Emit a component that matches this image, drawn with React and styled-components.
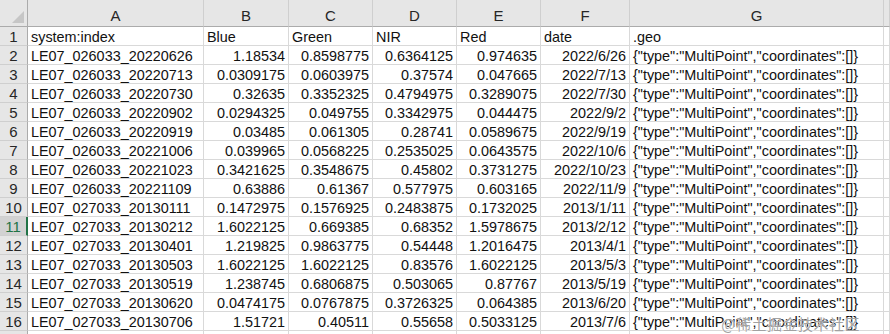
import React from 'react'
import styled, { createGlobalStyle } from 'styled-components'

const GlobalStyle = createGlobalStyle`
    html, body {
        margin: 0;
        padding: 0;
        background: #ffffff;
        overflow: hidden;
    }
`

const columns = [
    { letter: 'A', width: 176 },
    { letter: 'B', width: 85 },
    { letter: 'C', width: 84 },
    { letter: 'D', width: 84 },
    { letter: 'E', width: 84 },
    { letter: 'F', width: 89 },
    { letter: 'G', width: 254 },
]

const GEO = '{"type":"MultiPoint","coordinates":[]}'

const rows = [
    ['LE07_026033_20220626', '1.18534', '0.8598775', '0.6364125', '0.974635', '2022/6/26'],
    ['LE07_026033_20220713', '0.0309175', '0.0603975', '0.37574', '0.047665', '2022/7/13'],
    ['LE07_026033_20220730', '0.32635', '0.3352325', '0.4794975', '0.3289075', '2022/7/30'],
    ['LE07_026033_20220902', '0.0294325', '0.049755', '0.3342975', '0.044475', '2022/9/2'],
    ['LE07_026033_20220919', '0.03485', '0.061305', '0.28741', '0.0589675', '2022/9/19'],
    ['LE07_026033_20221006', '0.039965', '0.0568225', '0.2535025', '0.0643575', '2022/10/6'],
    ['LE07_026033_20221023', '0.3421625', '0.3548675', '0.45802', '0.3731275', '2022/10/23'],
    ['LE07_026033_20221109', '0.63886', '0.61367', '0.577975', '0.603165', '2022/11/9'],
    ['LE07_027033_20130111', '0.1472975', '0.1576925', '0.2483875', '0.1732025', '2013/1/11'],
    ['LE07_027033_20130212', '1.6022125', '0.669385', '0.68352', '1.5978675', '2013/2/12'],
    ['LE07_027033_20130401', '1.219825', '0.9863775', '0.54448', '1.2016475', '2013/4/1'],
    ['LE07_027033_20130503', '1.6022125', '1.6022125', '0.83576', '1.6022125', '2013/5/3'],
    ['LE07_027033_20130519', '1.238745', '0.6806875', '0.503065', '0.87767', '2013/5/19'],
    ['LE07_027033_20130620', '0.0474175', '0.0767875', '0.3726325', '0.064385', '2013/6/20'],
    ['LE07_027033_20130706', '1.51721', '0.40511', '0.55658', '0.5033125', '2013/7/6'],
]

const SELECTED_ROW = 11

const Sheet = styled.div`
    position: relative;
    width: 890px;
    height: 334px;
    overflow: hidden;
    display: grid;
    grid-template-columns: 28px ${columns.map(c => c.width + 'px').join(' ')} 1fr;
    grid-auto-rows: 19px;
    grid-template-rows: 27px;
    font-family: "Liberation Sans", "Noto Sans CJK SC", sans-serif;
    font-size: 14.4px;
    color: #111111;
`

const Corner = styled.div`
    position: relative;
    background: #e6e6e6;
    border-right: 1px solid #ababab;
    border-bottom: 1px solid #ababab;
    box-sizing: border-box;
    &::after {
        content: '';
        position: absolute;
        right: 3px;
        bottom: 3px;
        width: 0;
        height: 0;
        border-left: 12px solid transparent;
        border-bottom: 12px solid #c6c6c6;
    }
`

const ColHead = styled.div`
    background: #e6e6e6;
    border-right: 1px solid #cfcfcf;
    border-bottom: 1px solid #ababab;
    box-sizing: border-box;
    display: flex;
    align-items: flex-end;
    justify-content: center;
    padding-bottom: 1px;
    font-size: 15px;
    line-height: 19px;
    color: #262626;
`

const RowHead = styled.div`
    background: ${p => (p.$active ? '#d2d2d2' : '#e6e6e6')};
    border-right: ${p => (p.$active ? '2px solid #217346' : '1px solid #ababab')};
    border-bottom: 1px solid #cfcfcf;
    box-sizing: border-box;
    display: flex;
    align-items: center;
    justify-content: center;
    font-size: 15px;
    line-height: 19px;
    color: ${p => (p.$active ? '#217346' : '#262626')};
`

const Cell = styled.div`
    border-right: 1px solid #d9d9d9;
    border-bottom: 1px solid #d9d9d9;
    box-sizing: border-box;
    padding: 1px ${p => (p.$num ? '3px' : '2px')} 0 3px;
    line-height: 18px;
    white-space: nowrap;
    overflow: hidden;
    text-align: ${p => (p.$num ? 'right' : 'left')};
`

const Watermark = styled.div`
    position: absolute;
    right: 30px;
    bottom: 0px;
    font-family: "Noto Sans CJK SC", "Liberation Sans", sans-serif;
    font-size: 15px;
    line-height: 20px;
    color: rgba(120, 120, 120, 0.7);
    text-shadow: 0 0 1px #ffffff, 0 0 1px #ffffff;
    letter-spacing: 0.5px;
    pointer-events: none;
`

export default function App() {
    const header = ['system:index', 'Blue', 'Green', 'NIR', 'Red', 'date', '.geo']
    return (
        <>
            <GlobalStyle />
            <Sheet>
                <Corner />
                {columns.map(c => (
                    <ColHead key={c.letter}>{c.letter}</ColHead>
                ))}
                <ColHead />

                <RowHead>1</RowHead>
                {header.map(h => (
                    <Cell key={h}>{h}</Cell>
                ))}
                <Cell />

                {rows.map((r, i) => {
                    const n = i + 2
                    return (
                        <React.Fragment key={n}>
                            <RowHead $active={n === SELECTED_ROW}>{n}</RowHead>
                            <Cell>{r[0]}</Cell>
                            {r.slice(1).map((v, j) => (
                                <Cell key={j} $num>{v}</Cell>
                            ))}
                            <Cell>{GEO}</Cell>
                            <Cell />
                        </React.Fragment>
                    )
                })}

                <RowHead />
                {columns.map(c => (
                    <Cell key={c.letter} />
                ))}
                <Cell />
                <Watermark>@稀土掘金技术社区</Watermark>
            </Sheet>
        </>
    )
}
